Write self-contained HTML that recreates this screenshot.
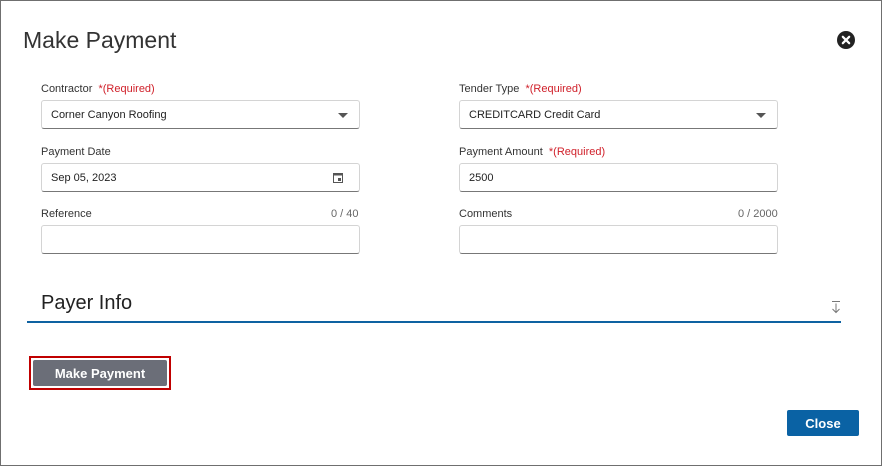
<!DOCTYPE html>
<html><head><style>
*{margin:0;padding:0;box-sizing:border-box}
body{width:882px;height:466px;background:#fff;font-family:"Liberation Sans",sans-serif;position:relative;overflow:hidden}
.frame{position:absolute;left:0;top:0;width:882px;height:466px;border:1px solid #6f6f6f}
.a{position:absolute;white-space:nowrap}
.title{left:23px;top:27px;font-size:23px;color:#333}
.lbl{font-size:11px;color:#333}
.req{color:#d0202a}
.cnt{font-size:11px;color:#666}
.in{position:absolute;width:319px;height:29px;border:1px solid #d4d4d4;border-bottom:1px solid #777;border-radius:3px;font-size:11px;color:#222;padding:0 9px;line-height:29px}
.caret{position:absolute;right:11px;top:12px;width:0;height:0;border-left:5px solid transparent;border-right:5px solid transparent;border-top:5px solid #555}
</style></head><body>
<div class="frame"></div>
<div class="a title">Make Payment</div>
<svg class="a" style="left:836px;top:30px" width="20" height="20" viewBox="0 0 20 20"><circle cx="10" cy="10" r="9" fill="#222"/><path d="M6.8 6.8L13.2 13.2M13.2 6.8L6.8 13.2" stroke="#fff" stroke-width="2.2" stroke-linecap="round"/></svg>

<div class="a lbl" style="left:41px;top:83px">Contractor&nbsp; <span class="req">*(Required)</span></div>
<div class="in" style="left:41px;top:100px">Corner Canyon Roofing<div class="caret"></div></div>
<div class="a lbl" style="left:41px;top:146px">Payment Date</div>
<div class="in" style="left:41px;top:163px">Sep 05, 2023
<svg class="a" style="right:16px;top:8px" width="10" height="11" viewBox="0 0 10 11"><rect x="0.5" y="1.5" width="9" height="9" fill="none" stroke="#555"/><rect x="0.5" y="1.5" width="9" height="2" fill="#555"/><rect x="5" y="6" width="3" height="3" fill="#555"/></svg></div>
<div class="a lbl" style="left:41px;top:208px">Reference</div>
<div class="a cnt" style="left:331px;top:208px">0 / 40</div>
<div class="in" style="left:41px;top:225px"></div>

<div class="a lbl" style="left:459px;top:83px">Tender Type&nbsp; <span class="req">*(Required)</span></div>
<div class="in" style="left:459px;top:100px">CREDITCARD Credit Card<div class="caret"></div></div>
<div class="a lbl" style="left:459px;top:146px">Payment Amount&nbsp; <span class="req">*(Required)</span></div>
<div class="in" style="left:459px;top:163px">2500</div>
<div class="a lbl" style="left:459px;top:208px">Comments</div>
<div class="a cnt" style="left:738px;top:208px">0 / 2000</div>
<div class="in" style="left:459px;top:225px"></div>

<div class="a" style="left:41px;top:292px;font-size:20px;color:#222">Payer Info</div>
<svg class="a" style="left:830px;top:300px" width="12" height="14" viewBox="0 0 12 14"><path d="M2 1.5H10M6 3.5V12.5M2.5 9L6 12.5L9.5 9" fill="none" stroke="#777" stroke-width="1"/></svg>
<div class="a" style="left:27px;top:321px;width:814px;height:2px;background:#0e62a1"></div>

<div class="a" style="left:29px;top:356px;width:142px;height:34px;border:2px solid #c00000"></div>
<div class="a" style="left:33px;top:360px;width:134px;height:26px;background:#6b6e78;border-radius:2px;color:#fff;font-weight:bold;font-size:13px;text-align:center;line-height:27px">Make Payment</div>
<div class="a" style="left:787px;top:410px;width:72px;height:26px;background:#0a62a4;border-radius:2px;color:#fff;font-weight:bold;font-size:13px;text-align:center;line-height:28px">Close</div>
</body></html>
